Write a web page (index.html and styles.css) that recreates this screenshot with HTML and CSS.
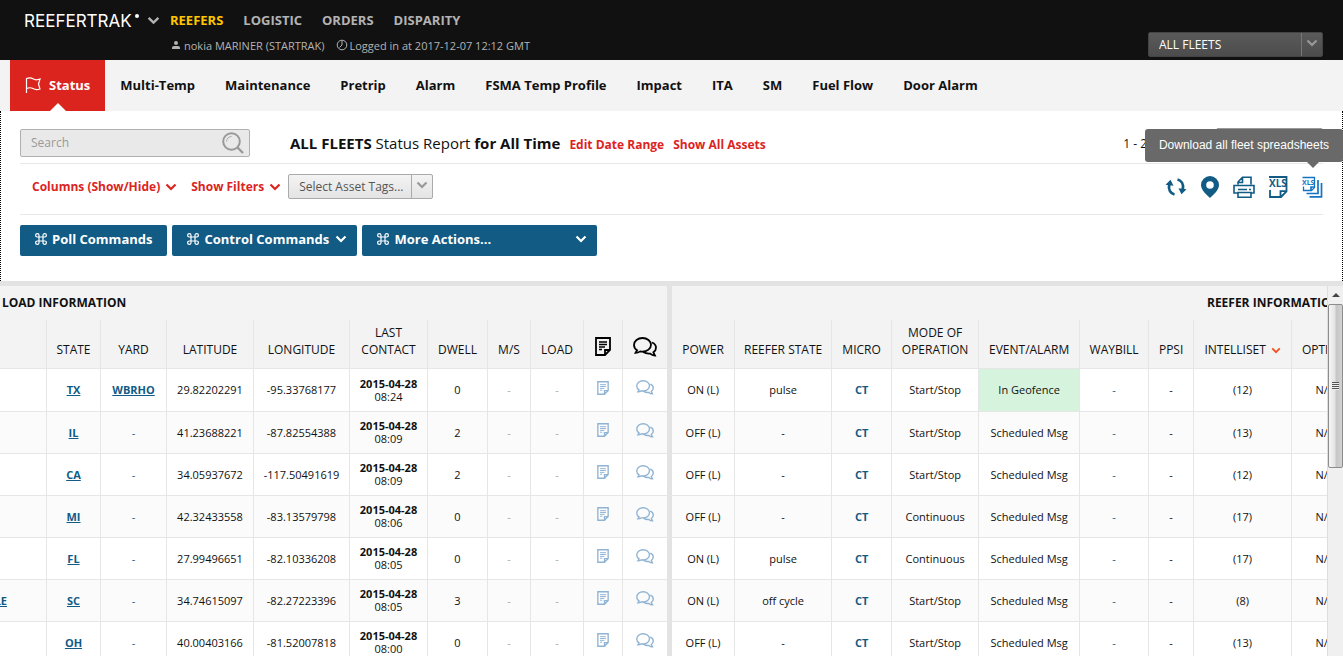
FILE: index.html
```html
<!DOCTYPE html>
<html lang="en">
<head>
<meta charset="utf-8">
<title>ReeferTrak - Status</title>
<link rel="stylesheet" href="styles.css">
</head>
<body>
<svg class="sprite" aria-hidden="true">
  <symbol id="chev" viewBox="0 0 12 8"><path d="M1.500 1.500 6 6l4.500-4.500" fill="none" stroke="currentColor" stroke-width="2.200"/></symbol>
  <symbol id="cmd" viewBox="0 0 12 12"><path d="M4 4V2.300A1.700 1.700 0 1 0 2.300 4h7.400A1.700 1.700 0 1 0 8 2.300v7.400A1.700 1.700 0 1 0 9.700 8H2.300A1.700 1.700 0 1 0 4 9.700z" fill="none" stroke="currentColor" stroke-width="1.200"/></symbol>
  <symbol id="note" viewBox="0 0 16 19"><path d="M1 1h14v12l-5 5H1z M15 13h-5v5" fill="none" stroke="currentColor" stroke-width="1.800"/><path d="M4 5h8M4 7.500h8M4 10h6M4 12.500h3" fill="none" stroke="currentColor" stroke-width="1.300"/></symbol>
  <symbol id="chat" viewBox="0 0 24 20"><path d="M9.500 1C4.800 1 1 4 1 7.900c0 2.200 1.200 4.100 3.100 5.300L2.500 15.900c2 0 3.500-.6 4.700-1.500.7.200 1.500.200 2.300.200 4.700 0 8.500-3 8.500-6.800S14.200 1 9.500 1z" fill="none" stroke="currentColor" stroke-width="1.800"/><path d="M19 5.500c2.400 1 4 3 4 5.200 0 1.900-1 3.500-2.600 4.600l1.600 3.200c-2 0-3.600-.7-4.800-1.900-2.700.3-5.200-.4-7.200-1.800" fill="none" stroke="currentColor" stroke-width="1.800"/></symbol>
</svg>

<header class="top">
  <div class="brand">
    <span class="logo">REEFERTRAK</span><i class="logo-dot"></i>
    <svg class="brand-chev"><use href="#chev"/></svg>
  </div>
  <div class="top-main">
    <nav class="areas">
      <a class="area area-on" href="#">REEFERS</a>
      <a class="area" href="#">LOGISTIC</a>
      <a class="area" href="#">ORDERS</a>
      <a class="area" href="#">DISPARITY</a>
    </nav>
    <div class="session">
      <svg class="ico-user" viewBox="0 0 10 8"><circle cx="5" cy="2" r="2" fill="currentColor"/><path d="M1 8V6.500Q1 5 3 5h4q2 0 2 1.500V8z" fill="currentColor"/></svg>
      <span class="session-user">nokia MARINER (STARTRAK)</span>
      <svg class="ico-clock" viewBox="0 0 12 12"><circle cx="6" cy="6" r="4.800" fill="none" stroke="currentColor"/><path d="M6 2v4L3.500 8.500" fill="none" stroke="currentColor"/></svg>
      <span>Logged in at 2017-12-07 12:12 GMT</span>
    </div>
  </div>
  <div class="pick pick-dark">
    <select class="pick-field" aria-label="Fleet"><option>ALL FLEETS</option></select>
    <svg class="pick-chev"><use href="#chev"/></svg>
  </div>
</header>

<nav class="tabs">
  <a class="tab tab-on" href="#"><svg class="ico-flag" viewBox="0 0 16 16"><path d="M1.500 16V1.500C4 .5 6 .5 8 1.800s4 1.400 7 .2l-1.500 5 1.500 5c-3 1-5 .8-7-.4s-4-1.100-6.500-.1" fill="none" stroke="currentColor" stroke-width="1.200"/></svg>Status</a>
  <a class="tab" href="#">Multi-Temp</a>
  <a class="tab" href="#">Maintenance</a>
  <a class="tab" href="#">Pretrip</a>
  <a class="tab" href="#">Alarm</a>
  <a class="tab" href="#">FSMA Temp Profile</a>
  <a class="tab" href="#">Impact</a>
  <a class="tab" href="#">ITA</a>
  <a class="tab" href="#">SM</a>
  <a class="tab" href="#">Fuel Flow</a>
  <a class="tab" href="#">Door Alarm</a>
</nav>

<section class="panel">
  <div class="bar bar-report">
    <form class="search">
      <input class="search-field" type="text" placeholder="Search" aria-label="Search">
      <button class="search-go" type="button" aria-label="Go"><svg class="ico-search" viewBox="0 0 22 22"><circle cx="9.500" cy="9.500" r="8.300" fill="none" stroke="#999" stroke-width="2"/><path d="M4.500 9.500a5 5 0 0 1 5-5" fill="none" stroke="#aaa"/><path d="M15.500 15.500l5.500 5.500" stroke="#999" stroke-width="2.400"/></svg></button>
    </form>
    <h1 class="title">ALL FLEETS <span class="title-light">Status Report</span> for All Time</h1>
    <a class="red title-link" href="#">Edit Date Range</a>
    <a class="red title-link" href="#">Show All Assets</a>
    <span class="range">1 - 2</span>
    <div class="pager"></div>
  </div>
  <div class="bar bar-tools">
    <a class="red drop" href="#">Columns (Show/Hide)<svg class="chev"><use href="#chev"/></svg></a>
    <a class="red drop" href="#">Show Filters<svg class="chev"><use href="#chev"/></svg></a>
    <div class="pick pick-light">
      <select class="pick-field" aria-label="Asset tags"><option>Select Asset Tags...</option></select>
      <svg class="pick-chev"><use href="#chev"/></svg>
    </div>
    <div class="tools">
      <button class="tool" type="button" aria-label="Refresh"><svg class="tool-ico" viewBox="0 0 22 22"><path d="M9.500 18.500C5.500 17.500 3.200 13.500 4.200 8.500M12.500 3.500c4 1 6.300 5 5.300 10" fill="none" stroke="currentColor" stroke-width="2.800"/><path d="M.5 8.800 5.500 3.800l3 6zM21.500 13.200l-5 5-3-6z" fill="currentColor"/></svg></button>
      <button class="tool" type="button" aria-label="Map"><svg class="tool-ico" viewBox="0 0 22 22"><path fill-rule="evenodd" d="M11 0a9 9 0 0 1 9 9c0 5-5 9-9 13C7 18 2 14 2 9a9 9 0 0 1 9-9zm0 5.200a3.800 3.800 0 1 0 0 7.600 3.800 3.800 0 0 0 0-7.600z" fill="currentColor"/></svg></button>
      <button class="tool" type="button" aria-label="Print"><svg class="tool-ico" viewBox="0 0 22 22"><path d="M5 8.500V6l4.500-4.800H18v7.300M5 6.500h4.500V1.500M4.500 17H1V9.500h20V17h-3.500M5 16.500h13v4.700H5z" fill="none" stroke="currentColor" stroke-width="1.600"/><path d="M5 13.500h9M16 13.500h2" stroke="currentColor" stroke-width="1.300"/></svg></button>
      <button class="tool" type="button" aria-label="Spreadsheet"><svg class="tool-ico" viewBox="0 0 22 22"><path d="M2 1h17.500V15.500l-5.500 5.500H3v-7M19.500 15.200h-6v6" fill="none" stroke="currentColor" stroke-width="1.800"/><text class="xls" x="2" y="11">XLS</text></svg></button>
      <button class="tool tool-hot" type="button" aria-describedby="tip"><svg class="tool-ico" viewBox="0 0 22 22"><path d="M2.500 10.500v4h8l3-3V1.500h-12" fill="none" stroke="currentColor" stroke-width="1.300"/><path d="M10 14.500v-3.500h3.500M17 4V17.500H5.500M20.500 7V20.800H8.500" fill="none" stroke="currentColor" stroke-width="1.700"/><text class="xls xls-small" x="1" y="9">XLS</text></svg><span class="tip" id="tip" role="tooltip">Download all fleet spreadsheets</span></button>
    </div>
  </div>
  <div class="cmds">
    <button class="cmd" type="button"><svg class="ico-cmd"><use href="#cmd"/></svg>Poll Commands</button>
    <button class="cmd" type="button"><svg class="ico-cmd"><use href="#cmd"/></svg>Control Commands<svg class="chev cmd-chev"><use href="#chev"/></svg></button>
    <button class="cmd cmd-wide" type="button"><svg class="ico-cmd"><use href="#cmd"/></svg>More Actions...<svg class="chev cmd-chev"><use href="#chev"/></svg></button>
  </div>
</section>

<main class="sheet">
  <div class="view">
    <table class="grid">
      <colgroup>
        <col class="w107"><col class="w54"><col class="w66"><col class="w87"><col class="w96"><col class="w78"><col class="w60"><col class="w43"><col class="w53"><col class="w39"><col class="w49">
        <col class="w63"><col class="w97"><col class="w60"><col class="w87"><col class="w101"><col class="w69"><col class="w45"><col class="w98"><col class="w67"><col class="w516">
      </colgroup>
      <thead>
        <tr class="groups"><th class="g-load" colspan="11">LOAD INFORMATION</th><th colspan="10">REEFER INFORMATION</th></tr>
        <tr class="heads">
          <th></th><th>STATE</th><th>YARD</th><th>LATITUDE</th><th>LONGITUDE</th><th>LAST<br>CONTACT</th><th>DWELL</th><th>M/S</th><th>LOAD</th>
          <th><svg class="h-note" role="img" aria-label="Notes"><use href="#note"/></svg></th><th class="edge"><svg class="h-chat" role="img" aria-label="Comments"><use href="#chat"/></svg></th>
          <th>POWER</th><th>REEFER STATE</th><th>MICRO</th><th>MODE OF<br>OPERATION</th><th>EVENT/ALARM</th><th>WAYBILL</th><th>PPSI</th><th>INTELLISET<svg class="sort"><use href="#chev"/></svg></th><th>OPTISET</th><th></th>
        </tr>
      </thead>
      <tbody id="rows"></tbody>
    </table>
  </div>
  <div class="scroll" aria-hidden="true">
    <div class="scroll-up"></div>
    <div class="scroll-thumb"><i class="grip"></i></div>
  </div>
</main>
<script src="rows.js"></script>
</body>
</html>
```
FILE: rows.js
```js
const assets = [
  ['', 'TX', 'WBRHO', '29.82202291', '-95.33768177', '08:24', '0', 'ON (L)', 'pulse', 'Start/Stop', 'In Geofence', '(12)'],
  ['', 'IL', '', '41.23688221', '-87.82554388', '08:09', '2', 'OFF (L)', '-', 'Start/Stop', 'Scheduled Msg', '(13)'],
  ['', 'CA', '', '34.05937672', '-117.50491619', '08:09', '2', 'OFF (L)', '-', 'Start/Stop', 'Scheduled Msg', '(12)'],
  ['', 'MI', '', '42.32433558', '-83.13579798', '08:06', '0', 'OFF (L)', '-', 'Continuous', 'Scheduled Msg', '(17)'],
  ['', 'FL', '', '27.99496651', '-82.10336208', '08:05', '0', 'ON (L)', 'pulse', 'Continuous', 'Scheduled Msg', '(17)'],
  ['LE', 'SC', '', '34.74615097', '-82.27223396', '08:05', '3', 'ON (L)', 'off cycle', 'Start/Stop', 'Scheduled Msg', '(8)'],
  ['', 'OH', '', '40.00403166', '-81.52007818', '08:00', '0', 'OFF (L)', '-', 'Start/Stop', 'Scheduled Msg', '(13)']
];

const link = (text) => (text ? `<a class="ref" href="#">${text}</a>` : '');
const dash = '<span class="dash">-</span>';
const blueDash = '<span class="dash-blue">-</span>';

document.getElementById('rows').innerHTML = assets.map((a) => `
  <tr>
    <td class="city">${link(a[0])}</td>
    <td>${link(a[1])}</td>
    <td>${link(a[2]) || blueDash}</td>
    <td>${a[3]}</td>
    <td>${a[4]}</td>
    <td class="when"><b>2015-04-28</b><br>${a[5]}</td>
    <td>${a[6]}</td>
    <td>${dash}</td>
    <td>${dash}</td>
    <td><svg class="c-note"><use href="#note"/></svg></td>
    <td class="edge"><svg class="c-chat"><use href="#chat"/></svg></td>
    <td>${a[7]}</td>
    <td>${a[8]}</td>
    <td><a class="micro" href="#">CT</a></td>
    <td>${a[9]}</td>
    <td class="${a[10] === 'In Geofence' ? 'ok' : ''}">${a[10]}</td>
    <td>${blueDash}</td>
    <td>-</td>
    <td>${a[11]}</td>
    <td>N/A</td>
    <td></td>
  </tr>`).join('');
```
FILE: styles.css
```css
* { box-sizing: border-box; }
body {
  margin: 0;
  height: 100vh;
  display: flex;
  flex-direction: column;
  overflow: hidden;
  background: #fff;
  color: #111;
  font: 12px/17px "Open Sans", "Noto Sans", sans-serif;
}
a { text-decoration: none; }
button, input, select { font-family: inherit; margin: 0; }
svg { flex: none; }
.sprite { position: absolute; width: 0; height: 0; }

.top { display: flex; flex: none; height: 60px; padding: 0 20px 0 24px; background: #111; color: #b3b3b3; }
.brand { display: flex; align-items: flex-start; width: 146px; padding-top: 10px; }
.logo { font: 17px/22px Inter, sans-serif; color: #fff; }
.logo-dot { width: 4px; height: 4px; margin: 4px 0 0 3px; border-radius: 50%; background: #fff; }
.brand-chev { width: 13px; height: 9px; margin: 6px 0 0 8px; }
.top-main { flex: 1; padding-top: 11px; }
.areas { display: flex; gap: 20px; }
.area { font-weight: 700; font-size: 13px; line-height: 18px; color: #b3b3b3; }
.area-on { color: #ffc600; }
.session { display: flex; align-items: center; margin-top: 9px; font-size: 11px; line-height: 16px; }
.ico-user { width: 10px; height: 8px; margin: 0 3px 2px 1px; }
.session-user { margin-right: 11px; }
.ico-clock { width: 12px; height: 12px; margin: 0 2px 2px 0; }

.pick { position: relative; display: flex; height: 25px; }
.pick-field {
  appearance: none;
  width: 100%;
  padding: 0 24px 0 10px;
  border: 1px solid;
  border-radius: 2px;
  font-size: 12px;
  color: inherit;
}
.pick::after { content: ""; position: absolute; top: 1px; bottom: 1px; right: 21px; width: 1px; }
.pick-chev { position: absolute; right: 5px; top: 7px; width: 12px; height: 8px; }
.pick-dark { width: 175px; margin-top: 32px; color: #fff; }
.pick-dark .pick-field { border-color: #444; background: linear-gradient(#5a5a5a, #4c4c4c); }
.pick-dark::after { background: #777; }
.pick-dark .pick-chev { color: #999; }
.pick-light { width: 145px; color: #555; }
.pick-light .pick-field { border-color: #aaa; background: linear-gradient(#f3f3f3, #e4e4e4); }
.pick-light::after { background: #aaa; }
.pick-light .pick-chev { color: #999; }

.tabs { display: flex; flex: none; height: 51px; padding-left: 10px; background: #f3f3f3; }
.tab { display: flex; align-items: center; padding: 0 15px 1px; font-weight: 700; font-size: 13px; color: #111; }
.tab-on { position: relative; background: #dc241f; color: #fff; }
.tab-on::after {
  content: "";
  position: absolute;
  left: 50%;
  bottom: 0;
  margin-left: -8px;
  border: 8px solid transparent;
  border-top: 0;
  border-bottom-color: #fff;
}
.ico-flag { width: 16px; height: 16px; margin-right: 8px; }

.panel { flex: none; padding: 0 19px 25px; border: 1px dotted #000; border-width: 0 1px; }
.bar { display: flex; align-items: center; border-bottom: 1px solid #e8e8e8; }
.bar-report { padding: 18px 0 6px; }
.search { position: relative; display: flex; width: 230px; height: 28px; margin-right: 40px; }
.search-field {
  width: 100%;
  padding: 0 36px 2px 10px;
  border: 1px solid #b0b0b0;
  border-radius: 2px;
  background: #e9e9e9;
  font-size: 12px;
}
.search-field::placeholder { color: #999; }
.search-go { position: absolute; right: 6px; top: 3px; padding: 0; border: 0; background: none; }
.ico-search { display: block; width: 22px; height: 22px; }
.title { margin: 0; font-size: 15px; line-height: 20px; font-weight: 700; }
.title-light { font-weight: 400; }
.red { font-weight: 700; font-size: 12px; color: #dc241f; }
.title-link { margin-left: 9px; padding-top: 2px; }
.range { margin-left: auto; }
.pager { width: 107px; height: 30px; margin: -1px 0 -1px 69px; border: 1px solid #999; border-radius: 2px; }
.bar-tools { padding: 10px 0 15px; }
.drop { display: flex; align-items: center; margin-left: 12px; }
.drop + .drop { margin-left: 14px; }
.chev { width: 12px; height: 8px; margin-left: 5px; }
.pick-light { margin-left: 7px; }
.tools { display: flex; gap: 12px; margin: -6px 0 -6px auto; }
.tool { position: relative; padding: 0; border: 0; background: none; color: #115b85; }
.tool-hot { color: #1474c4; }
.tool-ico { display: block; width: 22px; height: 22px; }
.xls { font: 700 10px "Liberation Sans Narrow", "Open Sans", sans-serif; fill: currentColor; }
.xls-small { font-size: 7px; }
.tip {
  position: absolute;
  right: -20px;
  bottom: 36px;
  padding: 8px 14px;
  border-radius: 3px;
  background: #696969;
  color: #fff;
  font: 12px/17px "Liberation Sans", Arial, sans-serif;
  white-space: nowrap;
}
.tip::after {
  content: "";
  position: absolute;
  top: 100%;
  right: 24px;
  border: 6px solid transparent;
  border-bottom: 0;
  border-top-color: #696969;
}
.cmds { display: flex; gap: 5px; padding-top: 10px; }
.cmd {
  display: flex;
  align-items: center;
  height: 31px;
  padding: 0 15px 3px;
  border: 0;
  border-radius: 2px;
  background: #115b85;
  color: #fff;
  font-weight: 700;
  font-size: 13px;
}
.ico-cmd { width: 12px; height: 12px; margin-right: 5px; }
.cmd .cmd-chev { margin: 0 -5px 0 auto; }
.cmd:nth-child(2) { width: 185px; }
.cmd-wide { width: 235px; }

.sheet { display: flex; flex: 1; min-height: 0; border-top: 5px solid #e3e3e3; }
.view { flex: 1; min-width: 0; overflow: hidden; }
.grid { table-layout: fixed; width: 1475px; margin-left: -60px; border-collapse: separate; border-spacing: 0; }
.w107 { width: 107px; } .w54 { width: 54px; } .w66 { width: 66px; } .w87 { width: 87px; }
.w96 { width: 96px; } .w78 { width: 78px; } .w60 { width: 60px; } .w43 { width: 43px; }
.w53 { width: 53px; } .w39 { width: 39px; } .w49 { width: 49px; } .w63 { width: 63px; }
.w97 { width: 97px; } .w101 { width: 101px; } .w69 { width: 69px; } .w45 { width: 45px; }
.w98 { width: 98px; } .w67 { width: 67px; } .w516 { width: 516px; }
.grid th { padding: 0; background: #f3f3f3; }
.groups th { height: 34px; padding-bottom: 2px; font-size: 12px; }
.grid .g-load { padding-left: 62px; text-align: left; border-right: 5px solid #e3e3e3; }
.grid .heads th {
  height: 49px;
  padding: 0 0 10px;
  border-right: 1px solid #e6e6e6;
  border-bottom: 1px solid #e6e6e6;
  vertical-align: bottom;
  font-weight: 400;
  white-space: nowrap;
}
.grid td {
  height: 42px;
  padding: 0 0 1px;
  border-right: 1px solid #e6e6e6;
  border-bottom: 1px solid #e6e6e6;
  text-align: center;
  font-size: 11px;
  line-height: 13px;
  white-space: nowrap;
}
.grid tbody tr:first-child td { height: 43px; }
.grid tbody tr:nth-child(even) td { background: #fbfbfb; }
.grid .edge, .grid .heads .edge { border-right: 5px solid #e3e3e3; }
.grid .city { padding-right: 39px; text-align: right; }
.grid tbody .ok { background: #d6f3dd; }
.ref { font-weight: 700; text-decoration: underline; color: #115b85; }
.micro { font-weight: 700; color: #115b85; }
.dash { color: #aaa; }
.dash-blue { color: #115b85; }
.h-note { display: block; width: 16px; height: 19px; margin: 0 auto 2px; color: #000; }
.h-chat { display: block; width: 24px; height: 20px; margin: 0 auto 1px; color: #000; }
.c-note { display: block; width: 12px; height: 14px; margin: 0 auto 4px; color: #8fb3d3; }
.c-chat { display: block; width: 18px; height: 15px; margin: 0 auto 4px; color: #8fb3d3; }
.sort { width: 10px; height: 7px; margin-left: 5px; color: #f4511e; }

.scroll { display: flex; flex-direction: column; width: 16px; background: #f0f0f0; border-left: 1px solid #ddd; }
.scroll-up { display: flex; align-items: center; justify-content: center; height: 18px; }
.scroll-up::before { content: ""; border: 4px solid transparent; border-top: 0; border-bottom-color: #444; }
.scroll-thumb {
  display: flex;
  align-items: center;
  justify-content: center;
  height: 164px;
  border: 1px solid #8c8c8c;
  border-radius: 2px;
  background: linear-gradient(90deg, #f5f5f5, #e3e3e3 45%, #c6c6c6 55%, #d2d2d2);
}
.grip { width: 7px; height: 8px; background: repeating-linear-gradient(#555 0 1px, #eee 1px 2px); }
```
